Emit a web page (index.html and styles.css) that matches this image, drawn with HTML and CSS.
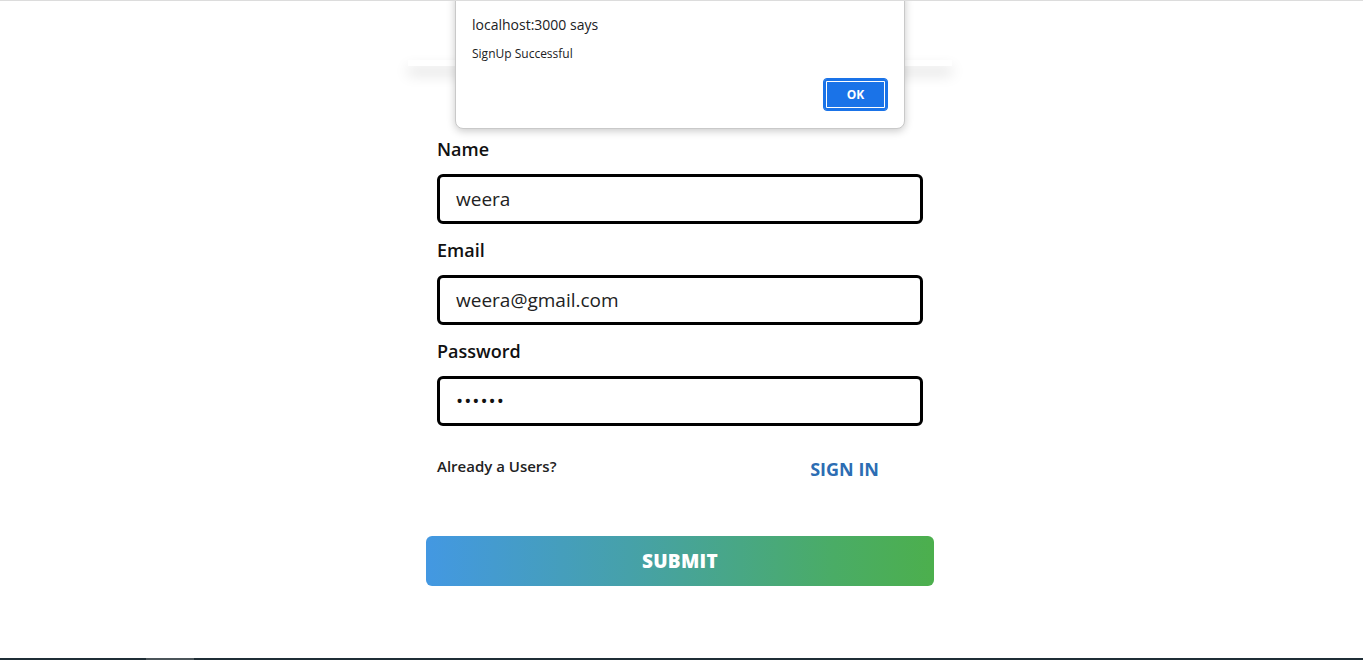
FILE: index.html
```html
<!DOCTYPE html>
<html lang="en">
<head>
<meta charset="utf-8">
<title>Sign Up</title>
<link rel="stylesheet" href="styles.css">
</head>
<body>
<div class="page">
  <div class="card">
    <div class="card-head"></div>
    <form class="form">
      <div class="field">
        <label class="label">Name</label>
        <div class="input">weera</div>
      </div>
      <div class="field">
        <label class="label">Email</label>
        <div class="input">weera@gmail.com</div>
      </div>
      <div class="field">
        <label class="label">Password</label>
        <div class="input dots">&#8226;&#8226;&#8226;&#8226;&#8226;&#8226;</div>
      </div>
      <div class="switch-row">
        <span class="already">Already a Users?</span>
        <span class="signin">SIGN IN</span>
      </div>
    </form>
    <div class="submit">SUBMIT</div>
  </div>
</div>
<div class="taskbar"><span class="taskbar-thumb"></span></div>
<div class="dialog">
  <div class="dialog-title">localhost:3000 says</div>
  <div class="dialog-msg">SignUp Successful</div>
  <div class="dialog-actions"><span class="ok">OK</span></div>
</div>
</body>
</html>
```
FILE: styles.css
```css
* { box-sizing: border-box; }
html, body { margin: 0; padding: 0; }
body {
  background: #fff;
  font-family: "Open Sans", "Noto Sans", sans-serif;
  height: 660px;
  overflow: hidden;
  position: relative;
  border-top: 1px solid #dcdcdc;
}
.page {
  display: flex;
  justify-content: center;
}
.card {
  width: 548px;
  display: flex;
  flex-direction: column;
  align-items: center;
  margin-left: -3px;
}
.card-head {
  width: 544px;
  height: 6px;
  margin-top: 59px;
  background: #fff;
  box-shadow: 0 8px 14px rgba(0,0,0,0.17);
}
.form {
  width: 486px;
  margin-top: 71px;
  display: flex;
  flex-direction: column;
}
.field {
  display: flex;
  flex-direction: column;
  margin-bottom: 14px;
}
.label {
  font-size: 18px;
  font-weight: 600;
  line-height: 24px;
  color: #111;
  margin-bottom: 13px;
}
.input {
  height: 50px;
  border: 3px solid #000;
  border-radius: 6px;
  padding: 0 16px;
  display: flex;
  align-items: center;
  font-size: 19px;
  color: #222;
}
.dots { font-size: 19px; letter-spacing: 1px; color: #111; }
.switch-row {
  display: flex;
  justify-content: space-between;
  align-items: flex-start;
  margin-top: 16px;
  padding-right: 44px;
}
.already {
  font-size: 15px;
  line-height: 20px;
  font-weight: 600;
  color: #222;
}
.signin {
  font-size: 18px;
  line-height: 24px;
  font-weight: 700;
  color: #2c6db3;
  margin-top: 1px;
}
.submit {
  width: 508px;
  height: 50px;
  margin-top: 55px;
  border-radius: 6px;
  background: linear-gradient(90deg, #4398e2 0%, #46a1a9 40%, #4aac66 80%, #4caf4d 100%);
  color: #fff;
  font-weight: 800;
  font-size: 19px;
  display: flex;
  align-items: center;
  justify-content: center;
  letter-spacing: 0.3px;
}
.taskbar {
  position: absolute;
  left: 0; right: 0; bottom: 0;
  height: 2px;
  background: #1f2e36;
}
.taskbar-thumb {
  position: absolute;
  left: 146px;
  width: 48px;
  top: 0; bottom: 0;
  background: #4b555a;
}
.dialog {
  position: absolute;
  left: 455px;
  top: -10px;
  width: 450px;
  height: 138px;
  background: #fff;
  border: 1px solid #c9c9c9;
  border-radius: 8px;
  box-shadow: 0 2px 8px rgba(0,0,0,0.22);
  padding: 24px 16px 0 16px;
  font-family: "Open Sans", "Noto Sans", sans-serif;
  display: flex;
  flex-direction: column;
}
.dialog-title {
  font-size: 14px;
  color: #202124;
  line-height: 18px;
}
.dialog-msg {
  font-size: 12px;
  color: #202124;
  margin-top: 12px;
  line-height: 16px;
}
.dialog-actions {
  display: flex;
  justify-content: flex-end;
  margin-top: 16px;
}
.ok {
  width: 65px;
  height: 33px;
  background: #1a73e8;
  border-radius: 4px;
  box-shadow: inset 0 0 0 2px #1a73e8, inset 0 0 0 3px #fff;
  border: 1px solid #1a73e8;
  color: #fff;
  font-size: 12px;
  font-weight: 700;
  display: flex;
  align-items: center;
  justify-content: center;
}
```
